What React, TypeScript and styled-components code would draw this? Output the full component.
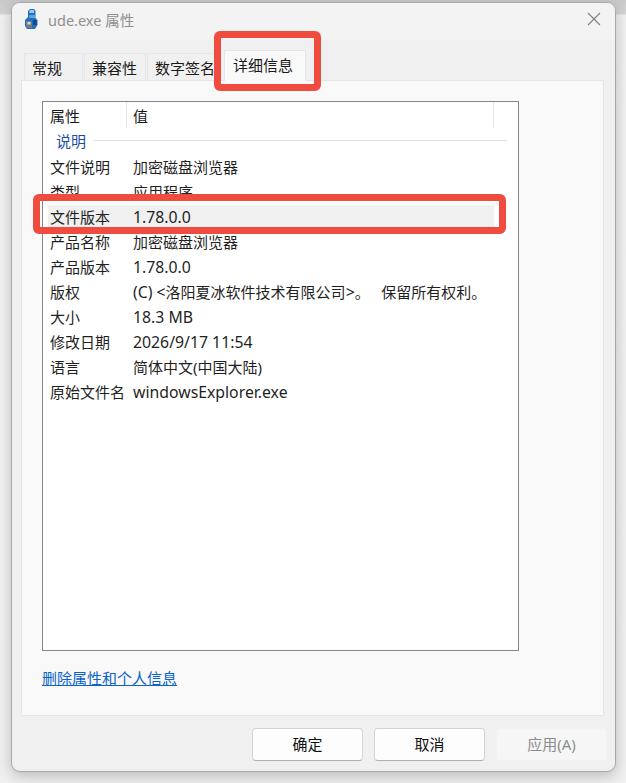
import React from 'react'
import styled, { createGlobalStyle } from 'styled-components'

const FONT = `"Noto Sans", "Noto Sans CJK SC", sans-serif`

const GlobalStyle = createGlobalStyle`
  html, body {
    margin: 0;
    padding: 0;
    background: #f2f2f2;
  }
  #root {
    width: 626px;
    height: 783px;
    overflow: hidden;
  }
`

const Desktop = styled.div`
  position: relative;
  width: 626px;
  height: 783px;
  box-sizing: border-box;
  padding: 2px 10px 0 11px;
  background: linear-gradient(#c9c9c9 0, #d4d4d4 14px, #f1f1f1 15px, #f0f0f0 100%);
  font-family: ${FONT};
  overflow: hidden;
`

const Win = styled.div`
  width: 605px;
  height: 770px;
  box-sizing: border-box;
  display: flex;
  flex-direction: column;
  background: #f0f0f0;
  border: 1px solid #a8a8a8;
  border-radius: 9px;
  box-shadow: 0 4px 14px rgba(0, 0, 0, 0.22);
  overflow: hidden;
`

const TitleBar = styled.div`
  height: 37px;
  flex: none;
  box-sizing: border-box;
  display: flex;
  align-items: center;
  padding: 0 13px 5px 13px;
  background: #f3f3f3;
`

const TitleText = styled.span`
  margin-left: 10px;
  font-size: 14.5px;
  color: #8f8f8f;
`

const CloseBtn = styled.svg`
  margin-left: auto;
  margin-right: 1px;
  width: 14px;
  height: 14px;
`

const TabRow = styled.div`
  height: 40px;
  flex: none;
  display: flex;
  align-items: flex-end;
  padding-left: 12px;
  gap: 1px;
`

const Tab = styled.div<{ $w: number; $active?: boolean }>`
  width: ${p => p.$w}px;
  height: ${p => (p.$active ? 31 : 27)}px;
  box-sizing: border-box;
  display: flex;
  align-items: center;
  padding: ${p => (p.$active ? '0 0 1px 8px' : '2px 0 0 7px')};
  font-size: 15px;
  line-height: 1;
  white-space: nowrap;
  color: #1a1a1a;
  background: ${p => (p.$active ? '#f9f9f9' : '#f0f0f0')};
  border: 1px solid #e6e6e6;
  border-bottom: none;
  margin-left: ${p => (p.$active ? 7 : 0)}px;
  margin-bottom: ${p => (p.$active ? -1 : 0)}px;
  position: relative;
  z-index: ${p => (p.$active ? 1 : 0)};
`

const Pane = styled.div`
  width: 583px;
  height: 636px;
  flex: none;
  margin-left: 9px;
  box-sizing: border-box;
  background: #f9f9f9;
  border: 1px solid #e5e5e5;
  padding: 20px 0 0 20px;
  display: flex;
  flex-direction: column;
`

const ListBox = styled.div`
  width: 477px;
  height: 550px;
  box-sizing: border-box;
  flex: none;
  background: #fff;
  border: 1px solid #828790;
  display: flex;
  flex-direction: column;
`

const HeaderRow = styled.div`
  height: 26px;
  flex: none;
  display: flex;
  width: 451px;
`

const HeaderCell = styled.div<{ $w?: number }>`
  ${p => (p.$w ? `width: ${p.$w}px;` : 'flex: 1;')}
  box-sizing: border-box;
  padding-left: ${p => (p.$w ? 7 : 6)}px;
  font-size: 15px;
  line-height: 29px;
  color: #1a1a1a;
  border-right: 1px solid #e5e5e5;
`

const GroupRow = styled.div`
  height: 25px;
  margin-bottom: 1px;
  flex: none;
  display: flex;
  align-items: center;
  padding-left: 13px;
  padding-right: 11px;
  gap: 7px;
  font-size: 15px;
  color: #1a4fa0;

  &::after {
    content: '';
    flex: 1;
    height: 1px;
    margin-top: -1px;
    background: #e0e0e0;
  }
`

const Row = styled.div<{ $selected?: boolean }>`
  height: 25px;
  flex: none;
  width: 446px;
  margin-left: 5px;
  display: flex;
  align-items: center;
  font-size: 15px;
  color: #1f1f1f;
  white-space: pre;
  background: ${p => (p.$selected ? '#f0f0f0' : 'transparent')};
`

const RowName = styled.span`
  width: 85px;
  flex: none;
  padding-left: 2px;
  box-sizing: border-box;
`

const Latin = styled.span`
  font-size: 15.8px;
`

const LinkRow = styled.a`
  margin-top: 17px;
  align-self: flex-start;
  font-size: 15px;
  line-height: 20px;
  color: #0a63c9;
  text-decoration: underline;
`

const Footer = styled.div`
  flex: 1;
  display: flex;
  justify-content: flex-end;
  gap: 11px;
  padding: 12px 8px 0 0;
`

const Btn = styled.div<{ $disabled?: boolean }>`
  width: 111px;
  height: 33px;
  box-sizing: border-box;
  display: flex;
  align-items: center;
  justify-content: center;
  padding-bottom: 2px;
  font-size: 15px;
  border-radius: 4px;
  color: ${p => (p.$disabled ? '#8c8c8c' : '#111')};
  background: ${p => (p.$disabled ? '#f6f6f6' : '#fdfdfd')};
  border: 1px solid ${p => (p.$disabled ? '#f2f2f2' : '#d4d4d4')};
  border-bottom-color: ${p => (p.$disabled ? '#f2f2f2' : '#b0b0b0')};
`

const Highlight = styled.div<{ $x: number; $y: number; $w: number; $h: number }>`
  position: absolute;
  left: ${p => p.$x}px;
  top: ${p => p.$y}px;
  width: ${p => p.$w}px;
  height: ${p => p.$h}px;
  box-sizing: border-box;
  border: 7px solid #ef4b3f;
  border-radius: 6px;
  z-index: 5;
`

const RowCover = styled.div`
  position: absolute;
  left: 43px;
  top: 194px;
  width: 450px;
  height: 11px;
  background: #fff;
  z-index: 4;
`

function FileIcon() {
  return (
    <svg width="13" height="20" viewBox="0 0 13 20">
      <path d="M3 2 L5 0 H9 L10.5 2 V9 L12.5 11 V16 L10 20 H2 L0 17 V11 L3 8 Z" fill="#1f6fc0" />
      <rect x="4.5" y="1" width="4.5" height="3" fill="#9cc9ee" />
      <rect x="4" y="6" width="6" height="3" fill="#5aa3e3" />
      <path d="M1 12 H7 V19 H2 L1 17 Z" fill="#6f7a86" />
      <rect x="2.5" y="13" width="3" height="2.5" fill="#d8dde2" />
      <rect x="8" y="11" width="3.5" height="5" fill="#16497f" />
    </svg>
  )
}

const rows: [string, React.ReactNode][] = [
  ['文件说明', '加密磁盘浏览器'],
  ['类型', '应用程序'],
  ['文件版本', <Latin>1.78.0.0</Latin>],
  ['产品名称', '加密磁盘浏览器'],
  ['产品版本', <Latin>1.78.0.0</Latin>],
  ['版权', <><Latin>(C) &lt;</Latin>洛阳夏冰软件技术有限公司<Latin>&gt;</Latin>。   保留所有权利。</>],
  ['大小', <Latin>18.3 MB</Latin>],
  ['修改日期', <Latin>2026/9/17 11:54</Latin>],
  ['语言', '简体中文(中国大陆)'],
  ['原始文件名', <Latin>windowsExplorer.exe</Latin>],
]

export default function App() {
  return (
    <Desktop>
      <GlobalStyle />
      <Win>
        <TitleBar>
          <FileIcon />
          <TitleText>ude.exe 属性</TitleText>
          <CloseBtn viewBox="0 0 14 14">
            <path d="M1 1 L13 13 M13 1 L1 13" stroke="#808080" strokeWidth="1.1" fill="none" />
          </CloseBtn>
        </TitleBar>
        <TabRow>
          <Tab $w={59}>常规</Tab>
          <Tab $w={62}>兼容性</Tab>
          <Tab $w={69}>数字签名</Tab>
          <Tab $w={82} $active>详细信息</Tab>
        </TabRow>
        <Pane>
          <ListBox>
            <HeaderRow>
              <HeaderCell $w={84}>属性</HeaderCell>
              <HeaderCell>值</HeaderCell>
            </HeaderRow>
            <GroupRow>说明</GroupRow>
            {rows.map(([name, value]) => (
              <Row key={name} $selected={name === '文件版本'}>
                <RowName>{name}</RowName>
                <span>{value}</span>
              </Row>
            ))}
          </ListBox>
          <LinkRow>删除属性和个人信息</LinkRow>
        </Pane>
        <Footer>
          <Btn>确定</Btn>
          <Btn>取消</Btn>
          <Btn $disabled>应用(A)</Btn>
        </Footer>
      </Win>
      <RowCover />
      <Highlight $x={214} $y={31} $w={107} $h={60} />
      <Highlight $x={33} $y={194} $w={473} $h={40} />
    </Desktop>
  )
}
